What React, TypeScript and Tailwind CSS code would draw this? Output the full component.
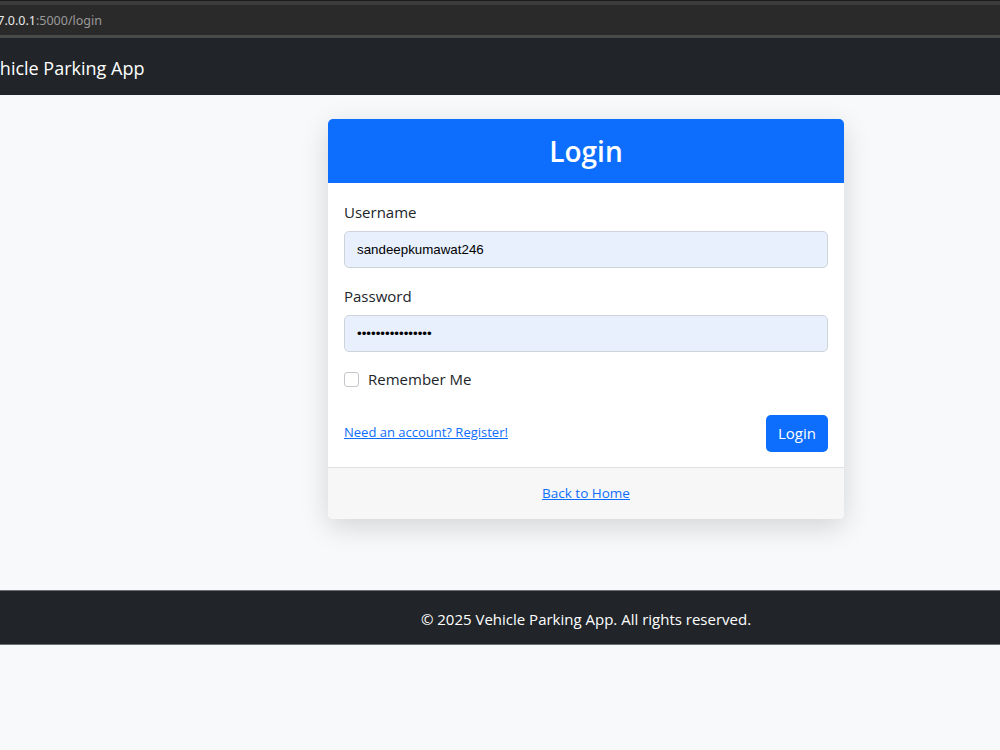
import React from "react";

const F = { fontFamily: '"Open Sans", "Noto Sans", sans-serif' };

export default function App() {
  return (
    <div className="w-[1000px] h-[750px] overflow-hidden bg-[#f8f9fb] flex flex-col" style={F}>
      {/* browser chrome */}
      <div className="h-[38px] bg-[#1f1f1f] flex flex-col shrink-0">
        <div className="h-[1px] bg-[#1b1b1b]" />
        <div className="h-[4px] bg-[#3c3c3c]" />
        <div className="h-[30px] bg-[#2a2a2a] flex items-center overflow-hidden pt-[2px]">
          <span className="ml-[-17px] text-[12.5px] whitespace-nowrap" style={{ fontFamily: '"Noto Sans", sans-serif' }}>
            <span className="text-[#e8e8e8]">127.0.0.1</span>
            <span className="text-[#9a9a9a]">:5000/login</span>
          </span>
        </div>
        <div className="h-[3px] bg-[#4a4a4a]" />
      </div>

      {/* navbar */}
      <div className="h-[57px] bg-[#212529] flex items-center overflow-hidden shrink-0 pt-[3px]">
        <span className="ml-[-21px] text-[18px] text-white whitespace-nowrap">Vehicle Parking App</span>
      </div>

      {/* main */}
      <div className="h-[495px] pl-[172px] pt-[24px] flex justify-center shrink-0">
        <div className="w-[516px] h-[400px] bg-white rounded-[5px] overflow-hidden shadow-[0_8px_28px_rgba(0,0,0,0.15)] flex flex-col">
          <div className="h-[64px] bg-[#0d6efd] flex items-center justify-center">
            <span className="text-white text-[28px] font-semibold">Login</span>
          </div>
          <div className="flex-1 px-[16px] pt-[17px] flex flex-col text-[#212529]">
            <label className="text-[15px] leading-[24px]">Username</label>
            <div className="mt-[7px] h-[37px] rounded-[5px] border border-[#ced4da] bg-[#e8f0fe] flex items-center px-[12px]">
              <span className="text-[13.33px] text-black" style={{ fontFamily: '"Liberation Sans", Arial, sans-serif' }}>sandeepkumawat246</span>
            </div>
            <label className="mt-[16px] text-[15px] leading-[24px]">Password</label>
            <div className="mt-[7px] h-[37px] rounded-[5px] border border-[#ced4da] bg-[#e8f0fe] flex items-center px-[12px]">
              <span className="text-[13.33px] text-black" style={{ fontFamily: '"Liberation Sans", Arial, sans-serif' }}>••••••••••••••••</span>
            </div>
            <div className="mt-[16px] flex items-center gap-[9px]">
              <div className="w-[15px] h-[15px] rounded-[3px] border border-[#c4c8cc] bg-white" />
              <span className="text-[15px] text-[#212529]">Remember Me</span>
            </div>
            <div className="mt-[24px] flex items-center justify-between">
              <a className="text-[13px] text-[#0d6efd] underline">Need an account? Register!</a>
              <button className="h-[37px] px-[12px] rounded-[5px] bg-[#0d6efd] text-white text-[15px]">Login</button>
            </div>
          </div>
          <div className="h-[52px] border-t border-[#dee2e6] bg-[#f7f7f7] flex items-center justify-center">
            <a className="text-[13.5px] text-[#0d6efd] underline">Back to Home</a>
          </div>
        </div>
      </div>

      {/* footer */}
      <div className="h-[55px] bg-[#212529] border-t border-[#6c6f72] border-b flex items-center justify-center pl-[172px] pt-[3px] shrink-0">
        <span className="text-white text-[15px]">© 2025 Vehicle Parking App. All rights reserved.</span>
      </div>
      <div className="flex-1 bg-[#f8f9fb]" />
    </div>
  );
}
